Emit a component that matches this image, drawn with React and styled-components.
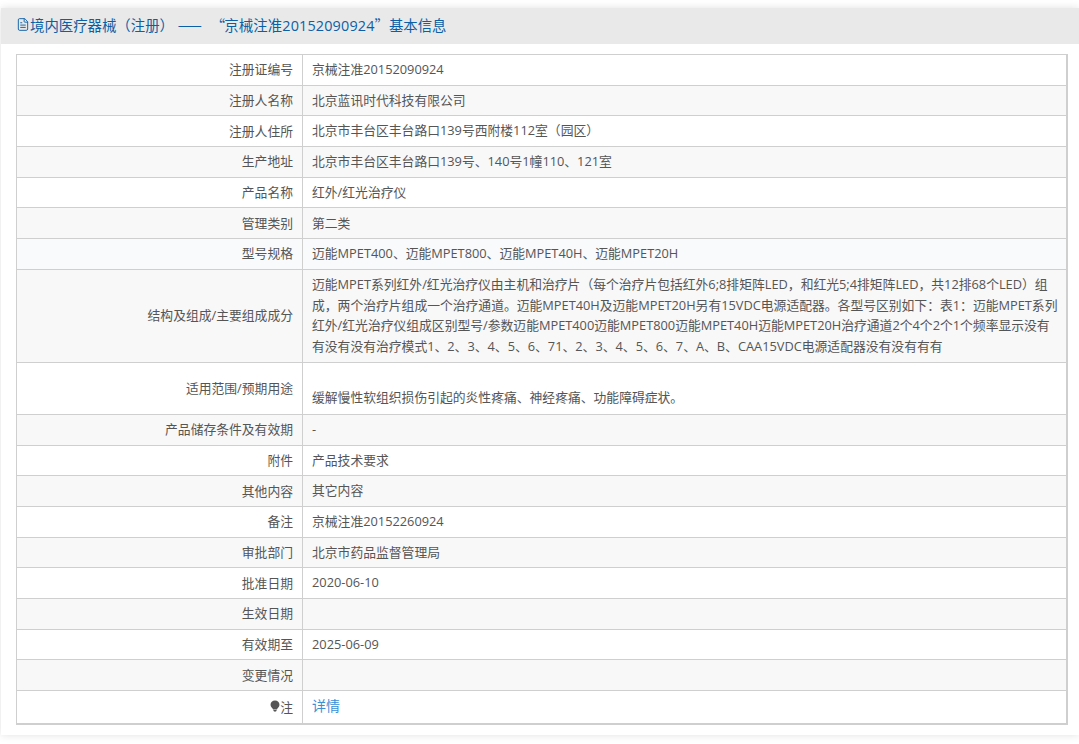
import styled, { createGlobalStyle } from "styled-components";
import { FileText } from "lucide-react";

const GlobalStyle = createGlobalStyle`
  html, body { margin: 0; padding: 0; background: #fff; }
  body { font-family: "Open Sans", "Noto Sans CJK SC", sans-serif; }
`;

const Page = styled.div`
  width: 1079px;
  height: 744px;
  overflow: hidden;
  padding: 8px 0 0 1px;
  box-sizing: border-box;
`;

const Panel = styled.div`
  background: #fff;
  height: 727px;
  box-shadow: 0 0 8px rgba(0, 0, 0, 0.12);
`;

const Heading = styled.div`
  height: 36px;
  box-sizing: border-box;
  padding: 0 0 3px 15px;
  background: #e9e9e9;
  display: flex;
  align-items: center;
  font-size: 14.4px;
  color: #0b5fa5;
  white-space: pre;
`;

const DocIcon = styled(FileText)`
  width: 14px;
  height: 15px;
  stroke-width: 1.6;
`;

const Wide = styled.span`
  font-family: "Noto Sans CJK SC", sans-serif;
  margin-left: ${(p) => p.$gap || 0}px;
`;

const Code = styled.span`
  letter-spacing: 0.15px;
  margin-left: -1px;
`;

const Table = styled.div`
  margin: 10px 11px 0 15px;
  border: 1px solid #cfcfcf;
  border-right-width: 2px;
  border-bottom-width: 2px;
`;

const Row = styled.div`
  display: grid;
  grid-template-columns: 286px 1fr;
  box-sizing: border-box;
  height: ${(p) => p.$h || 30.7}px;
  border-bottom: ${(p) => (p.$last ? "none" : "1px solid #cfcfcf")};
  background: ${(p) => p.$bg || "#fff"};
  font-size: 12.8px;
  color: #555;
`;

const Label = styled.div`
  display: flex;
  align-items: center;
  justify-content: flex-end;
  padding: 0 9px 2px 0;
  border-right: 1px solid #cfcfcf;
`;

const Value = styled.div`
  display: flex;
  align-items: ${(p) => (p.$bottom ? "flex-end" : "center")};
  padding: ${(p) => (p.$bottom ? "0 5px 6px 9px" : "0 5px 1px 9px")};
  line-height: 20.5px;
`;

const Link = styled.a`
  color: #3b8fd5;
  font-size: 14px;
`;

const BulbIcon = () => (
  <svg width="10" height="12" viewBox="0 0 11 13" fill="#555">
    <path d="M5.5 0.5C2.6 0.5 0.6 2.6 0.6 5c0 2 1.4 3 2.2 4.2.3.4.4.8.5 1.1h4.4c.1-.3.2-.7.5-1.1.8-1.2 2.2-2.2 2.2-4.2 0-2.4-2-4.5-4.9-4.5z" />
    <path d="M3.8 11h3.4v.7c0 .5-.8 1-1.7 1s-1.7-.5-1.7-1z" />
  </svg>
);

const GRAY = "#f8f8f8";

const rows = [
  ["注册证编号", "京械注准20152090924"],
  ["注册人名称", "北京蓝讯时代科技有限公司", GRAY],
  ["注册人住所", "北京市丰台区丰台路口139号西附楼112室（园区）"],
  ["生产地址", "北京市丰台区丰台路口139号、140号1幢110、121室", GRAY],
  ["产品名称", "红外/红光治疗仪"],
  ["管理类别", "第二类", GRAY],
  ["型号规格", "迈能MPET400、迈能MPET800、迈能MPET40H、迈能MPET20H", "#f8fafc"],
  [
    "结构及组成/主要组成成分",
    "迈能MPET系列红外/红光治疗仪由主机和治疗片（每个治疗片包括红外6;8排矩阵LED，和红光5;4排矩阵LED，共12排68个LED）组成，两个治疗片组成一个治疗通道。迈能MPET40H及迈能MPET20H另有15VDC电源适配器。各型号区别如下：表1：迈能MPET系列红外/红光治疗仪组成区别型号/参数迈能MPET400迈能MPET800迈能MPET40H迈能MPET20H治疗通道2个4个2个1个频率显示没有有没有没有治疗模式1、2、3、4、5、6、71、2、3、4、5、6、7、A、B、CAA15VDC电源适配器没有没有有有",
    GRAY,
    93,
  ],
  ["适用范围/预期用途", "缓解慢性软组织损伤引起的炎性疼痛、神经疼痛、功能障碍症状。", "#fff", 52, true],
  ["产品储存条件及有效期", "-", GRAY],
  ["附件", "产品技术要求"],
  ["其他内容", "其它内容", GRAY],
  ["备注", "京械注准20152260924"],
  ["审批部门", "北京市药品监督管理局", GRAY],
  ["批准日期", "2020-06-10"],
  ["生效日期", "", GRAY],
  ["有效期至", "2025-06-09"],
  ["变更情况", "", GRAY],
];

function App() {
  return (
    <Page lang="zh-CN">
      <GlobalStyle />
      <Panel>
        <Heading>
          <DocIcon />
          境内医疗器械（注册） <Wide>——</Wide>
          <Wide $gap={9}>“</Wide>
          <Code>京械注准20152090924</Code>
          <Wide>”</Wide>基本信息
        </Heading>
        <Table>
          {rows.map(([label, value, bg, h, bottom]) => (
            <Row key={label} $h={h} $bg={bg}>
              <Label>{label}</Label>
              <Value $bottom={bottom}>{value}</Value>
            </Row>
          ))}
          <Row $h={32} $last>
            <Label>
              <BulbIcon />注
            </Label>
            <Value>
              <Link>详情</Link>
            </Value>
          </Row>
        </Table>
      </Panel>
    </Page>
  );
}

export default App;
